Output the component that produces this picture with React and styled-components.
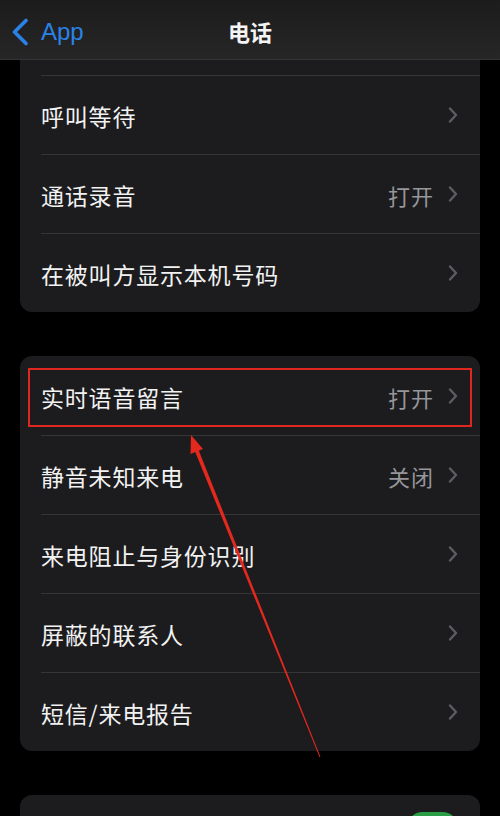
import React from 'react';
import styled, { createGlobalStyle } from 'styled-components';

const Global = createGlobalStyle`
    html, body {
        margin : 0;
        padding : 0;
        background : #000;
        overflow : hidden;
    }
    body {
        font-family : "Noto Sans CJK SC", "Noto Sans", "Liberation Sans", sans-serif;
        -webkit-font-smoothing : antialiased;
    }
`

const Page = styled.div`
    position : relative;
    width : 500px;
    height : 816px;
    overflow : hidden;
    background : #000;
`

const NavBar = styled.div`
    height : 60px;
    display : flex;
    align-items : center;
    justify-content : center;
    position : relative;
    background : linear-gradient(180deg, #1c1c1c 0%, #262626 100%);
    border-bottom : 1px solid #333;
    box-sizing : border-box;
`

const Back = styled.div`
    position : absolute;
    left : 11px;
    top : 0;
    height : 60px;
    display : flex;
    align-items : center;
    gap : 12px;
    color : #2b82e6;
    font-family : "Liberation Sans", "Noto Sans", sans-serif;
    font-size : 24px;
    padding-top : 4px;
    box-sizing : border-box;
`

const Title = styled.h1`
    margin : 0;
    font-size : 22px;
    font-weight : 600;
    color : #f4f4f4;
    padding-top : 2px;
`

const Content = styled.div`
    padding : 0 20px;
    display : flex;
    flex-direction : column;
    gap : 44px;
`

const Card = styled.div`
    background : #1c1c1e;
    border-radius : ${p => p.$cut ? '0 0 12px 12px' : '12px'};
    overflow : hidden;
`

const Stub = styled.div`
    height : 15px;
`

const Row = styled.div`
    position : relative;
    height : 79px;
    padding-left : 21px;
    box-sizing : border-box;
`

const RowInner = styled.div`
    height : 100%;
    display : flex;
    align-items : ${p => p.$top ? 'flex-start' : 'center'};
    padding-right : 22px;
    border-top : ${p => p.$first ? 'none' : '1px solid #353537'};
    box-sizing : border-box;
`

const Label = styled.span`
    flex : 1;
    font-size : 23px;
    color : #f2f2f2;
    letter-spacing : 0.8px;
    padding-top : 2px;
`

const Value = styled.span`
    font-size : 22px;
    color : #96969b;
    letter-spacing : 1px;
    margin-right : 14px;
    padding-top : 2px;
`

const Highlight = styled.div`
    position : absolute;
    left : 8px;
    right : 8px;
    top : 12px;
    bottom : 8px;
    border : 2px solid #e0271f;
    pointer-events : none;
`

const Toggle = styled.div`
    margin-top : 17px;
    width : 51px;
    height : 31px;
    border-radius : 16px;
    background : #2a9e47;
`

const Overlay = styled.svg`
    position : absolute;
    left : 0;
    top : 0;
    pointer-events : none;
`

const Chevron = () => (
    <svg width="10" height="16" viewBox="0 0 10 16">
        <path d="M2 1.5 L8 8 L2 14.5" fill="none" stroke="#5c5c61" strokeWidth="2.4" strokeLinecap="round" strokeLinejoin="round" />
    </svg>
)

const BackChevron = () => (
    <svg width="18" height="28" viewBox="0 0 18 28">
        <path d="M15 2.5 L3.5 14 L15 25.5" fill="none" stroke="#2b82e6" strokeWidth="3.6" strokeLinecap="round" strokeLinejoin="round" />
    </svg>
)

const topRows = [
    { label: '呼叫等待' },
    { label: '通话录音', value: '打开' },
    { label: '在被叫方显示本机号码' },
]

const mainRows = [
    { label: '实时语音留言', value: '打开', marked: true },
    { label: '静音未知来电', value: '关闭' },
    { label: '来电阻止与身份识别' },
    { label: '屏蔽的联系人' },
    { label: '短信/来电报告' },
]

function SettingRow({ label, value, first, marked }) {
    return (
        <Row>
            <RowInner $first={first}>
                <Label>{label}</Label>
                {value && <Value>{value}</Value>}
                <Chevron />
            </RowInner>
            {marked && <Highlight />}
        </Row>
    )
}

export default function App() {
    return (
        <>
            <Global />
            <Page>
                <NavBar>
                    <Back><BackChevron />App</Back>
                    <Title>电话</Title>
                </NavBar>
                <Content>
                    <Card $cut>
                        <Stub />
                        {topRows.map((row, index) => (
                            <SettingRow key={index} {...row} />
                        ))}
                    </Card>
                    <Card>
                        {mainRows.map((row, index) => (
                            <SettingRow key={index} first={index === 0} {...row} />
                        ))}
                    </Card>
                    <Card>
                        <Row>
                            <RowInner $first $top>
                                <Label></Label>
                                <Toggle />
                            </RowInner>
                        </Row>
                    </Card>
                </Content>
                {/* 注釈の矢印 */}
                <Overlay width="500" height="816" viewBox="0 0 500 816">
                    <polygon points="197.6,447.6 194.0,449.0 319.6,757.2 320.4,756.8" fill="#e3281e" />
                    <polygon points="191,435 203,449 190.5,454" fill="#e3281e" />
                </Overlay>
            </Page>
        </>
    )
}
